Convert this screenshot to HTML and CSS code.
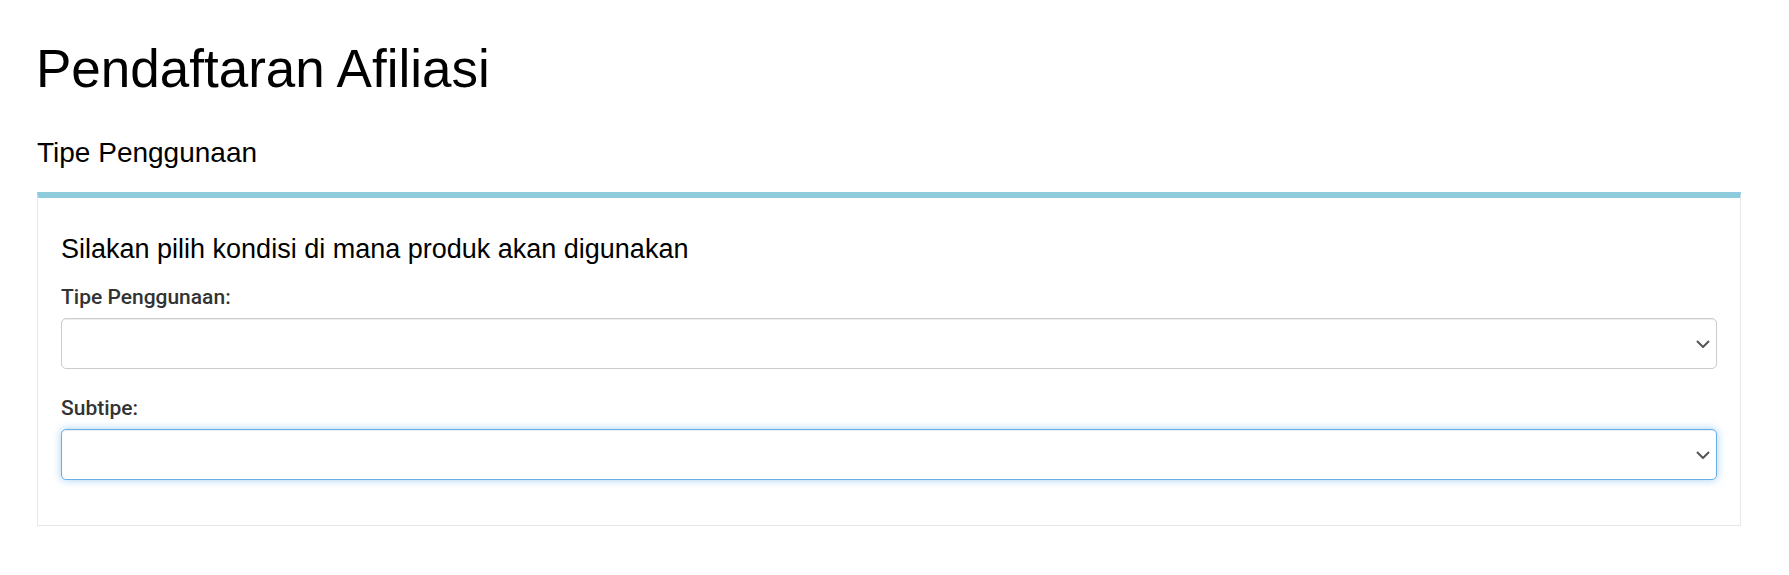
FILE: index.html
```html
<!DOCTYPE html>
<html lang="id">
<head>
    <meta charset="UTF-8">
    <title>Pendaftaran Afiliasi</title>
    <link rel="stylesheet" href="styles.css">
</head>
<body>
    <h1 class="page-title">Pendaftaran Afiliasi</h1>
    <h2 class="section-title">Tipe Penggunaan</h2>

    <div class="panel">
        <p class="panel-lead">Silakan pilih kondisi di mana produk akan digunakan</p>

        <label class="field-label" for="usageType">Tipe Penggunaan:</label>
        <div class="select-wrap">
            <select id="usageType" class="field-select">
                <option></option>
            </select>
            <svg class="select-arrow" width="14" height="8" viewBox="0 0 14 8">
                <path d="M1 1 L7 7 L13 1" fill="none" stroke="#555" stroke-width="2"/>
            </svg>
        </div>

        <label class="field-label" for="subType">Subtipe:</label>
        <div class="select-wrap">
            <select id="subType" class="field-select focused">
                <option></option>
            </select>
            <svg class="select-arrow" width="14" height="8" viewBox="0 0 14 8">
                <path d="M1 1 L7 7 L13 1" fill="none" stroke="#555" stroke-width="2"/>
            </svg>
        </div>
    </div>
</body>
</html>
```

FILE: styles.css
```css
body {
    margin: 0;
    padding: 38px 48px 0 37px;
    font-family: 'Liberation Sans', Arial, sans-serif;
    color: #000;
    background: #fff;
}

.page-title {
    margin: 0 0 0 -1px;
    font-size: 53px;
    line-height: 61px;
    font-weight: normal;
}

.section-title {
    margin: 38px 0 0;
    font-size: 28px;
    line-height: 32px;
    font-weight: normal;
}

.panel {
    margin-top: 23px;
    border: 1px solid #e8e8e8;
    border-top: 6px solid #8ecbdc;
    padding: 36px 23px 45px;
}

.panel-lead {
    margin: 0;
    font-size: 27px;
    line-height: 31px;
}

.field-label {
    display: block;
    margin-top: 21px;
    font-family: Roboto, 'Noto Sans', sans-serif;
    font-size: 21px;
    line-height: 23px;
    font-weight: 500;
    color: #333;
}

.select-wrap + .field-label {
    margin-top: 28px;
}

.select-wrap {
    position: relative;
    margin-top: 9px;
}

.field-select {
    display: block;
    width: 100%;
    height: 51px;
    margin: 0;
    padding: 0 40px 0 12px;
    box-sizing: border-box;
    border: 1px solid #ccc;
    border-radius: 5px;
    background: #fff;
    box-shadow: inset 0 1px 1px rgba(0, 0, 0, 0.075);
    appearance: none;
    -webkit-appearance: none;
    font-family: Roboto, sans-serif;
    font-size: 16px;
    outline: none;
}

.field-select.focused {
    border-color: #66afe9;
    box-shadow: inset 0 1px 1px rgba(0, 0, 0, 0.075), 0 0 8px rgba(102, 175, 233, 0.6);
}

.select-arrow {
    position: absolute;
    right: 7px;
    top: 50%;
    margin-top: -4px;
    pointer-events: none;
}
```
